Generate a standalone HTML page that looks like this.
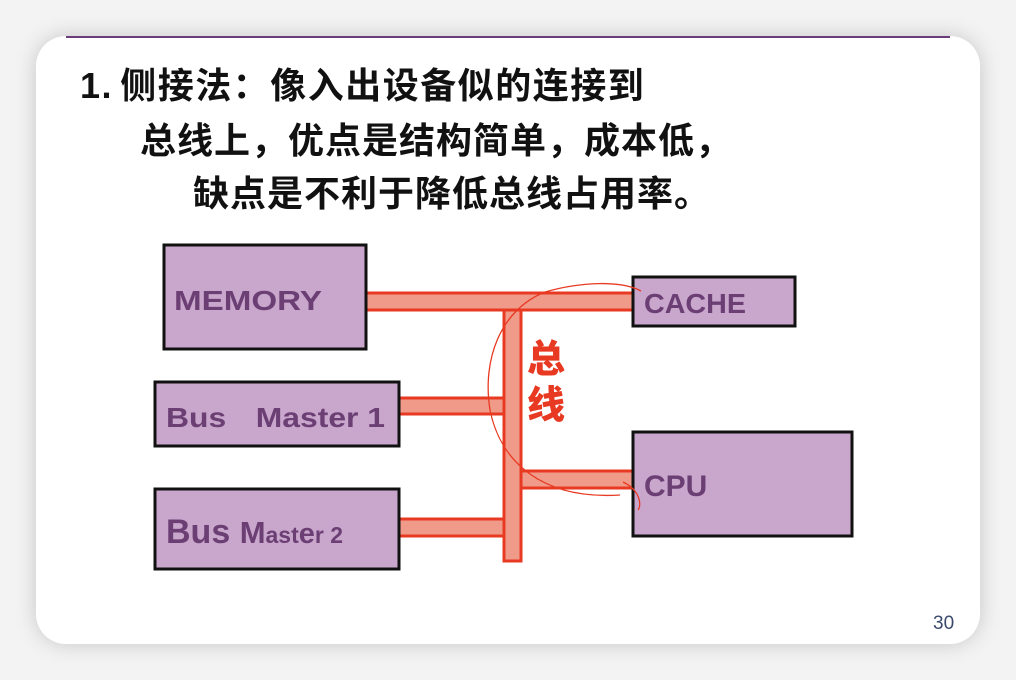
<!DOCTYPE html><html><head><meta charset="utf-8"><style>
body{margin:0;width:1016px;height:680px;background:#f3f3f3;overflow:hidden;font-family:"Liberation Sans","Noto Sans CJK SC",sans-serif}
.card{position:absolute;left:36px;top:36px;width:944px;height:608px;background:#fff;border-radius:30px;box-shadow:0 0 22px rgba(0,0,0,.18);overflow:hidden}
.card:before{content:"";position:absolute;left:30px;right:30px;top:0;height:2px;background:#6a3d7a}
.t{position:absolute;font-weight:bold;font-size:36px;line-height:40px;color:#111;white-space:nowrap;letter-spacing:1px;font-family:"Liberation Sans","Noto Sans CJK SC",sans-serif}
.n{position:absolute;left:897px;top:577px;font-size:19px;color:#3b4a6b}
</style></head><body>
<div class="card">
<div class="t" style="left:44px;top:30px;letter-spacing:1.5px">1.<span style="margin-left:0.2em"></span>侧接法：像入出设备似的连接到</div>
<div class="t" style="left:104px;top:85px">总线上，优点是结构简单，成本低，</div>
<div class="t" style="left:157px;top:138px">缺点是不利于降低总线占用率。</div>
<div class="n">30</div>
</div>
<svg style="position:absolute;left:0;top:0" width="1016" height="680" font-family="Liberation Sans, sans-serif" font-weight="bold">
<g fill="#f09a8a" stroke="#e83a22" stroke-width="3">
<rect x="366" y="293" width="268" height="17"/>
<rect x="504" y="310" width="17" height="251"/>
<rect x="398" y="398" width="106" height="16"/>
<rect x="398" y="519" width="106" height="17"/>
<rect x="521" y="471" width="112" height="17"/>
</g>
<g fill="#c9a6cc" stroke="#111" stroke-width="3">
<rect x="164" y="245" width="202" height="104"/>
<rect x="155" y="382" width="244" height="64"/>
<rect x="155" y="489" width="244" height="80"/>
<rect x="633" y="277" width="162" height="49"/>
<rect x="633" y="432" width="219" height="104"/>
</g>
<g fill="#6b3f74">
<text x="174" y="310" font-size="28" textLength="148" lengthAdjust="spacingAndGlyphs">MEMORY</text>
<text x="166" y="427" font-size="28" textLength="219" lengthAdjust="spacingAndGlyphs">Bus<tspan dx="26">Master 1</tspan></text>
<text x="166" y="543" font-size="34">Bus <tspan font-size="31">M</tspan><tspan font-size="23">ast</tspan><tspan font-size="29">e</tspan><tspan font-size="23">r 2</tspan></text>
<text x="644" y="313" font-size="28" textLength="102" lengthAdjust="spacingAndGlyphs">CACHE</text>
<text x="644" y="496" font-size="30">CPU</text>
</g>
<text x="527" y="372" font-size="38" font-weight="900" fill="#e83a22" font-family="Noto Sans CJK SC, sans-serif">总</text>
<text x="527" y="418" font-size="38" font-weight="900" fill="#e83a22" font-family="Noto Sans CJK SC, sans-serif">线</text>
<path d="M641,291 C620,280 580,282 545,292 C500,310 482,360 490,410 C500,460 540,500 620,495" fill="none" stroke="#e83a22" stroke-width="1.3"/>
<path d="M623,482 C640,490 642,505 638,510" fill="none" stroke="#e83a22" stroke-width="1.3"/>
</svg>
</body></html>
